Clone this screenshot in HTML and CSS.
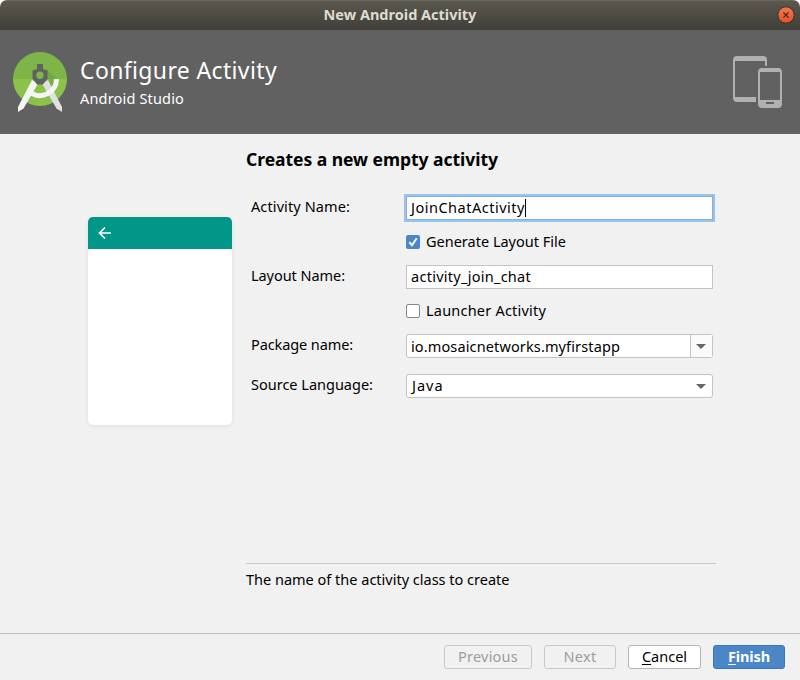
FILE: index.html
```html
<!DOCTYPE html>
<html lang="en">
<head>
<meta charset="utf-8">
<title>New Android Activity</title>
<link rel="stylesheet" href="styles.css">
</head>
<body>
<div class="window">
  <header class="titlebar">
    <span class="titlebar-text">New Android Activity</span>
    <svg class="close" viewBox="0 0 18 18" width="18" height="18">
      <defs><linearGradient id="closeFill" x1="0" y1="0" x2="0" y2="1"><stop offset="0" stop-color="#f4764e"/><stop offset="1" stop-color="#e6531f"/></linearGradient></defs>
      <circle cx="9" cy="9" r="8.2" fill="url(#closeFill)" stroke="#35332d" stroke-width="1"/>
      <path d="M6.4 6.4l5.200 5.200M11.600 6.400l-5.200 5.200" stroke="#3c2a20" stroke-width="1.300"/>
    </svg>
  </header>
  <section class="banner">
    <svg class="logo" viewBox="0 0 56 62" width="56" height="62">
      <defs><clipPath id="disc"><circle cx="28" cy="28" r="27"/></clipPath></defs>
      <g clip-path="url(#disc)">
        <rect width="56" height="28" fill="#7eb548"/>
        <rect y="28" width="56" height="28" fill="#8bc34a"/>
        <path d="M34 18L45 28V38L38 46 32 34z" fill="#6a9c3c" opacity=".5"/>
      </g>
      <path d="M36 29L50 56V61L44.500 57.500 30 32.500z" fill="#e0e0e0"/>
      <path d="M20 29L6 56V61L11.500 57.500 26 32.500z" fill="#f5f5f5"/>
      <path d="M18.500 41.500A16.500 16.500 0 0 0 44.500 28" fill="none" stroke="#f5f5f5" stroke-width="5"/>
      <path fill-rule="evenodd" d="M25 13h6v5l4.500 1.500v8l-4.500 6h-6l-4.500-6v-8l4.500-1.500zM28 20.500a3.700 3.700 0 1 0 0 7.400 3.700 3.700 0 0 0 0-7.400z" fill="#616161"/>
    </svg>
    <div class="banner-text">
      <h1>Configure Activity</h1>
      <p>Android Studio</p>
    </div>
    <svg class="devices" viewBox="0 0 50 53" width="50" height="53">
      <path fill-rule="evenodd" fill="#afb1b3" d="M4 0H30a4 4 0 0 1 4 4V10H32V5H2V41H23V46H4a4 4 0 0 1-4-4V4a4 4 0 0 1 4-4z"/>
      <path fill-rule="evenodd" fill="#afb1b3" d="M29 12H45a4 4 0 0 1 4 4V48a4 4 0 0 1-4 4H29a4 4 0 0 1-4-4V16a4 4 0 0 1 4-4zM27 16V44H47V16zM33 46V48H41V46z"/>
    </svg>
  </section>
  <main class="content">
    <div class="preview"><div class="preview-bar">
      <svg viewBox="0 0 14 14" width="14" height="14"><path d="M13 7H1.500M7 1.500L1.500 7 7 12.500" fill="none" stroke="#fff" stroke-width="1.700"/></svg>
    </div></div>
    <div class="pane">
      <h2>Creates a new empty activity</h2>
      <div class="form">
        <label class="label-activity">Activity Name:</label>
        <div class="field focused"><span class="value-activity">JoinChatActivity</span><i class="caret"></i></div>
        <div class="check"><span class="box checked"><svg viewBox="0 0 14 14" width="14" height="14"><path d="M3.300 7.300L6 10.200 10.700 3.200" fill="none" stroke="#fff" stroke-width="2"/></svg></span><span>Generate Layout File</span></div>
        <label class="label-layout">Layout Name:</label>
        <div class="field"><span class="value-layout">activity_join_chat</span></div>
        <div class="check"><span class="box"></span><span class="check-launcher">Launcher Activity</span></div>
        <label class="label-package">Package name:</label>
        <div class="field combo"><span class="value-package">io.mosaicnetworks.myfirstapp</span><span class="drop split"><i></i></span></div>
        <label>Source Language:</label>
        <div class="field combo"><span class="value-language">Java</span><span class="drop"><i></i></span></div>
      </div>
      <p class="hint">The name of the activity class to create</p>
    </div>
  </main>
  <footer class="actions">
    <button class="previous" disabled>Previous</button>
    <button class="next" disabled>Next</button>
    <button class="cancel"><u>C</u>ancel</button>
    <button class="finish"><u>F</u>inish</button>
  </footer>
</div>
</body>
</html>
```
FILE: styles.css
```css
* { box-sizing: border-box; }
body { margin: 0; background: #fff; color: #000; font: 14.5px/20px "Noto Sans", sans-serif; }
h1, h2, p { margin: 0; font-weight: 400; white-space: nowrap; }
.window { width: 800px; height: 680px; display: flex; flex-direction: column; background: #f1f1f1; border-radius: 7px 7px 0 0; overflow: hidden; }
.titlebar { position: relative; height: 30px; display: flex; align-items: center; justify-content: center; padding-bottom: 3px; background: linear-gradient(#5b584f, #3f3e38); border-top: 1px solid #68655c; color: #dfdbd2; font-weight: 700; }
.close { position: absolute; right: 5px; top: 5px; }
.banner { height: 104px; padding: 21px 17px 0 12px; display: flex; align-items: flex-start; background: #616161; color: #fff; }
.logo { flex: none; }
.banner-text { flex: 1; padding-left: 12px; }
.banner h1 { font-size: 23px; line-height: 32px; padding-top: 3px; letter-spacing: .36px; }
.banner p { line-height: 20px; padding-top: 2px; letter-spacing: .17px; }
.devices { margin-top: 5px; flex: none; }
.content { height: 499px; display: flex; padding: 0 84px 0 88px; }
.preview { width: 144px; height: 208px; margin: 83px 14px 0 0; background: #fff; border-radius: 5px; box-shadow: 0 1px 4px rgba(0,0,0,.08); overflow: hidden; }
.preview-bar { height: 32px; background: #009688; padding: 9px 10px; }
.preview-bar svg { display: block; }
.pane { width: 470px; display: flex; flex-direction: column; }
h2 { font-size: 17.5px; font-weight: 700; line-height: 24px; padding-top: 13px; height: 62px; letter-spacing: -.033px; }
.form { display: grid; grid-template-columns: 155px 307px; grid-template-rows: 39px 30px 39px 30px 40px 24px; align-items: start; padding-left: 5px; height: 367px; }
.form label { line-height: 20px; white-space: nowrap; }
.label-activity { letter-spacing: .108px; }
.label-layout { letter-spacing: -.055px; }
.label-package { letter-spacing: -.1px; }
.field { position: relative; height: 24px; display: flex; align-items: center; padding: 0 0 0 4px; background: #fff; border: 1px solid #c3c3c3; line-height: 20px; white-space: nowrap; }
.focused { border-color: #87afda; box-shadow: 0 0 0 2px #97c3f3; }
.value-activity, .value-layout, .value-language { padding-bottom: 2px; }
.value-activity { letter-spacing: .5px; }
.value-layout { letter-spacing: .267px; }
.value-package { letter-spacing: .127px; }
.value-language { padding-left: 1px; letter-spacing: 1px; }
.caret { width: 1px; height: 18px; background: #000; }
.check { grid-column: 2; height: 14px; display: flex; align-items: center; gap: 6px; line-height: 20px; }
.check span + span { padding-bottom: 2px; }
.check-launcher { letter-spacing: .21px; }
.box { width: 14px; height: 14px; background: #fff; border: 1px solid #878787; border-radius: 2px; }
.box.checked { background: #4a86c8; border: 0; }
.box svg { display: block; }
.combo { border-radius: 3px; }
.drop { margin-left: auto; width: 22px; height: 22px; display: flex; align-items: center; justify-content: center; }
.split { border-left: 1px solid #c3c3c3; background: #fafafa; }
.drop i { border: solid transparent; border-width: 5px 5px 0; border-top-color: #666; }
.split i { margin-right: 1px; }
.hint { border-top: 1px solid #cacaca; padding-top: 5px; }
.actions { flex: 1; border-top: 1px solid #bfbfbf; display: flex; justify-content: flex-end; gap: 12px; padding: 11px 15px 0 0; }
.actions button { height: 24px; padding: 0 0 2px; font: inherit; line-height: 20px; border: 1px solid #b5b5b5; border-radius: 3px; background: #fff; color: #000; white-space: nowrap; }
.actions button:disabled { background: #f1f1f1; border-color: #cacaca; color: #9d9d9d; }
.actions .previous { width: 88px; letter-spacing: .23px; }
.actions .next { width: 72px; letter-spacing: .29px; }
.actions .cancel { width: 73px; }
.actions .finish { width: 72px; background: #4a86c8; border-color: #3c76b6; color: #fff; font-weight: 700; letter-spacing: -.13px; }
.actions u { text-underline-offset: 2px; }
```
